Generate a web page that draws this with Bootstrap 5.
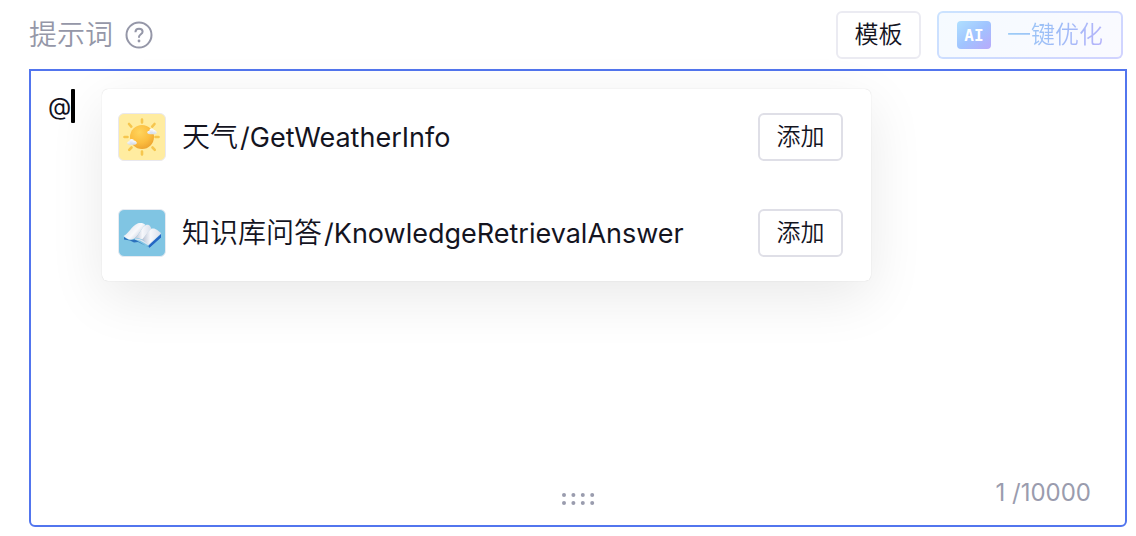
<!DOCTYPE html>
<html lang="zh-CN">
<head>
<meta charset="utf-8">
<meta name="viewport" content="width=device-width, initial-scale=1">
<title>提示词</title>
<link href="https://cdn.jsdelivr.net/npm/bootstrap@5.3.0/dist/css/bootstrap.min.css" rel="stylesheet">
<style>
  body { font-family: Inter, "Noto Sans CJK SC", sans-serif; color: #14141f; background: #fff; }
  .prompt-page { padding: 11px 9px 9px 29px; }
  .prompt-head { padding-right: 4px; margin-bottom: 10px; }
  .prompt-title { font-size: 28px; line-height: 40px; color: #9597a8; font-weight: 350; }
  .help-btn { width: 28px; height: 28px; line-height: 0; }
  .plain-btn, .ai-btn { --bs-btn-padding-x: 16px; --bs-btn-padding-y: 0; --bs-btn-font-size: 24px; --bs-btn-border-width: 2px; --bs-btn-border-radius: 6px; height: 48px; line-height: 44px; font-weight: 350; }
  .plain-btn { min-width: 85px; --bs-btn-color: #14141f; --bs-btn-bg: #fff; --bs-btn-border-color: #dfdfe7; --bs-btn-hover-border-color: #b9bac8; }
  .template-btn { --bs-btn-border-color: #ebebf2; }
  .ai-btn { --bs-btn-padding-x: 18px; --bs-btn-disabled-opacity: 1; background: linear-gradient(135deg, #f5faff, #fafaff) padding-box, linear-gradient(150deg, #cbe3ff, #d1d3ff) border-box; }
  .ai-btn:disabled { border-color: transparent; }
  .ai-text { background: linear-gradient(110deg, #9dcdf7 5%, #9dbcf7 50%, #b9b3fb); -webkit-background-clip: text; background-clip: text; color: transparent; }
  .editor { border: 2px solid #5275ee; border-radius: 0 0 6px 6px; }
  .editor-input { border: 0; outline: 0; resize: none; padding: 16px 17px; font-size: 24px; line-height: 40px; color: #14141f; caret-color: #000; }
  .text-caret { left: 40px; top: 18px; width: 4px; height: 34px; background: #000; border-radius: 1px; }
  .char-count { font-size: 24px; line-height: 36px; color: #9a9cae; margin-bottom: 14px; padding-right: 34px; }
  .drag-dots { color: #9a9cae; margin-bottom: 19px; line-height: 0; }
  .mention-menu { left: 71px; top: 18px; width: 769px; max-width: 90%; border-radius: 6px; box-shadow: 0 0 1px rgba(0,0,0,.2), 0 16px 56px rgba(0,0,0,.09); }
  .mention-row { padding: 24px 28px 24px 16px; }
  .mention-name { font-size: 28px; line-height: 48px; font-weight: 350; margin-left: 16px; }
  .latin { font-size: 27px; line-height: 40px; font-weight: 400; margin-left: 2px; }
</style>
</head>
<body>
<main class="prompt-page min-vh-100 d-flex flex-column">
  <header class="prompt-head d-flex align-items-center justify-content-between">
    <div class="d-flex align-items-center gap-2">
      <label class="prompt-title" for="prompt">提示词</label>
      <button class="btn p-0 border-0 help-btn ms-1" type="button" aria-label="帮助">
        <svg width="28" height="28" viewBox="0 0 28 28" fill="none" stroke="#9597a8" stroke-width="2" aria-hidden="true"><circle cx="14" cy="14" r="12.5"/><path d="M10.4 11.2C10.5 8.9 12 7.8 14 7.8c2.1 0 3.6 1.2 3.6 3 0 2.400-3.6 2.700-3.6 5.300v.6"/><circle cx="14" cy="20" r="1.400" fill="#9597a8" stroke="none"/></svg>
      </button>
    </div>
    <div class="d-flex gap-3">
      <button class="btn plain-btn template-btn" type="button">模板</button>
      <button class="btn ai-btn d-flex align-items-center gap-3" type="button" disabled>
        <svg width="34" height="28" viewBox="0 0 34 28" aria-hidden="true">
          <defs>
            <linearGradient id="aiFill" x1="0" y1="0" x2="1" y2="1"><stop offset="0" stop-color="#b0e0ff"/><stop offset=".5" stop-color="#a0c4ff"/><stop offset="1" stop-color="#b9a9fb"/></linearGradient>
          </defs>
          <rect width="34" height="28" rx="4" fill="url(#aiFill)"/>
          <text x="17" y="20" text-anchor="middle" font-family="'DejaVu Sans Mono', monospace" font-size="16" font-weight="700" fill="#fff">AI</text>
        </svg>
        <span class="ai-text">一键优化</span>
      </button>
    </div>
  </header>

  <section class="editor position-relative flex-grow-1 d-flex flex-column">
    <textarea class="editor-input flex-grow-1 w-100 bg-transparent" id="prompt" maxlength="10000" spellcheck="false">@</textarea>
    <span class="text-caret position-absolute" aria-hidden="true"></span>
    <div class="row g-0 align-items-end">
      <div class="col-6 offset-3 text-center drag-dots">
        <svg width="34" height="14" viewBox="0 0 34 14" fill="currentColor" aria-hidden="true"><circle cx="3" cy="3" r="2"/><circle cx="12.400" cy="3" r="2"/><circle cx="21.800" cy="3" r="2"/><circle cx="31.200" cy="3" r="2"/><circle cx="3" cy="11" r="2"/><circle cx="12.400" cy="11" r="2"/><circle cx="21.800" cy="11" r="2"/><circle cx="31.200" cy="11" r="2"/></svg>
      </div>
      <div class="col-3 text-end char-count">1 /10000</div>
    </div>

    <div class="mention-menu position-absolute bg-white">
      <div class="mention-row d-flex align-items-center">
        <svg width="48" height="48" viewBox="0 0 48 48" aria-hidden="true">
          <defs>
            <radialGradient id="sunFill" cx=".4" cy=".3" r=".75"><stop offset="0" stop-color="#ffd45c"/><stop offset=".6" stop-color="#fbbd3f"/><stop offset="1" stop-color="#eca22f"/></radialGradient>
            <linearGradient id="cloudFill" x1="0" y1="0" x2="0" y2="1"><stop offset="0" stop-color="#fff"/><stop offset="1" stop-color="#d3dbe9"/></linearGradient>
          </defs>
          <rect x=".5" y=".5" width="47" height="47" rx="5.500" fill="#ffeca0" stroke="#e9e8ee"/>
          <g stroke="#f6c64e" stroke-width="2.600" stroke-linecap="round"><path d="M24 6.500v3M24 38.500v3M6.500 24h3M37.500 24h3M11 11l2.300 2.600M34.500 34.500l2.300 2.300M36.500 11l-2.300 2.600M13.500 34.500l-2.300 2.300"/></g>
          <circle cx="24" cy="24" r="12" fill="url(#sunFill)"/>
          <g id="cloud" fill="url(#cloudFill)"><ellipse cx="34" cy="19.400" rx="4.800" ry="1.900"/><circle cx="33.700" cy="18" r="2.400"/><circle cx="36.200" cy="18.800" r="1.700"/></g>
          <use href="#cloud" x="-20" y="10.500"/>
        </svg>
        <span class="mention-name flex-grow-1">天气<span class="latin">/GetWeatherInfo</span></span>
        <button class="btn plain-btn" type="button">添加</button>
      </div>
      <div class="mention-row d-flex align-items-center">
        <svg width="48" height="48" viewBox="0 0 48 48" aria-hidden="true">
          <defs>
            <linearGradient id="pageL" x1="0" y1="0" x2="1" y2=".7"><stop offset="0" stop-color="#d5dae6"/><stop offset=".6" stop-color="#f8f9fc"/><stop offset="1" stop-color="#bfc7d8"/></linearGradient>
            <linearGradient id="pageR" x1="0" y1=".5" x2="1" y2=".5"><stop offset="0" stop-color="#b7c0d2"/><stop offset=".45" stop-color="#f6f7fb"/><stop offset="1" stop-color="#d9dfeb"/></linearGradient>
          </defs>
          <rect x=".5" y=".5" width="47" height="47" rx="5.500" fill="#80c5e3" stroke="#e6eaf1"/>
          <path d="M6 28l5 3 6-.5 13 7.500 13-12v2L31.500 38.500 20 33l-4 .5-4-2-6-1z" fill="#2c71bd"/>
          <path d="M5.500 27c5-2 8-10 14-12.500 3-1 6-.5 8 1.500-4 3-6 9-10.500 13-3 1.500-5 2.500-8 .5z" fill="url(#pageL)"/>
          <path d="M17 29c5-4 6.500-11 11-13 4-.8 4.500 2 5.500 4-3 2-5 6-9 10.500-2.500-1-4.500-1.700-7.500-1.500z" fill="url(#pageR)"/>
          <path d="M24 30.500c4-4 6-9 10-11 4-.6 6 2.500 9 4.500L30.500 36c-2-2-4-4-6.500-5.500z" fill="url(#pageR)"/>
          <path d="M17 29.500c5-.5 9 2 13.500 6L43 24v1L30.500 36.500 22 31.500l-5-1z" fill="#dce4f0"/>
          <path d="M30.500 36.500L43 25v3.500L31.500 38.800z" fill="#2467c4"/>
        </svg>
        <span class="mention-name flex-grow-1">知识库问答<span class="latin">/KnowledgeRetrievalAnswer</span></span>
        <button class="btn plain-btn" type="button">添加</button>
      </div>
    </div>
  </section>
</main>
<script src="https://cdn.jsdelivr.net/npm/bootstrap@5.3.0/dist/js/bootstrap.bundle.min.js"></script>
</body>
</html>
